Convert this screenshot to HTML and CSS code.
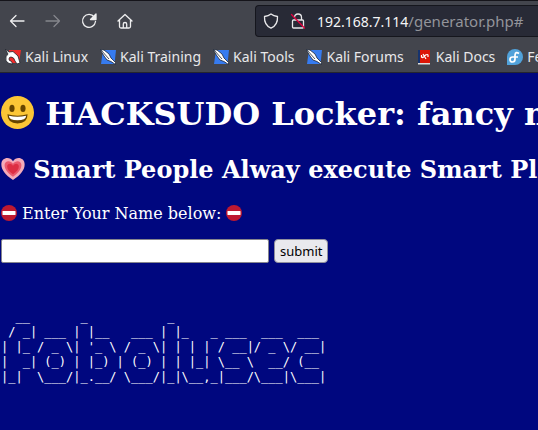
FILE: index.html
```html
<!DOCTYPE html>
<html lang="en">
<head>
<meta charset="utf-8">
<title>HACKSUDO Locker</title>
<link rel="stylesheet" href="styles.css">
</head>
<body>
<svg class="defs" aria-hidden="true">
  <symbol id="tool" viewBox="0 0 16 16">
    <path d="M3 1h13l-1.500 14H1z" fill="#367bf0"/>
    <path d="M0 .5L4 1l5 4 2 4 4.500 4.500v2L11 12.500 7 11 4 7z" fill="#fff" stroke="#1b2436" stroke-width=".8"/>
    <path d="M1 1l8 9" stroke="#1b2436" stroke-width=".8"/>
  </symbol>
  <symbol id="stop" viewBox="0 0 16 16">
    <circle cx="8" cy="8" r="8" fill="#be1931"/>
    <rect x="1.500" y="6" width="13" height="4" rx=".6" fill="#fff"/>
  </symbol>
</svg>
<header class="browser">
  <nav class="toolbar" aria-label="Navigation">
    <button class="tool" aria-label="Back"><svg viewBox="0 0 16 16"><path d="M15 8H1.500M7 2.500L1.500 8 7 13.500"/></svg></button>
    <button class="tool tool-off" aria-label="Forward"><svg viewBox="0 0 16 16"><path d="M1 8h13.500M9 2.500L14.500 8 9 13.500"/></svg></button>
    <button class="tool" aria-label="Reload"><svg viewBox="0 0 16 16"><path d="M13.300 4A6.500 6.500 0 1 0 14.500 8.500"/><path class="solid" d="M15 1v5.500H9.500z"/></svg></button>
    <button class="tool" aria-label="Home"><svg viewBox="0 0 16 16"><path d="M1 8l7-6.500L15 8M2.500 7v6.500q0 1.500 1.500 1.500h8q1.500 0 1.500-1.500V7M6.300 15v-4q0-1.500 1.700-1.500t1.700 1.500v4"/></svg></button>
    <div class="address">
      <svg viewBox="0 0 16 16"><path d="M8 1Q10.500 3 14.500 3.500 15 12 8 15.200 1 12 1.500 3.500 5.500 3 8 1z"/></svg>
      <svg viewBox="0 0 16 16"><path d="M4.500 4.500Q4.500 1 8 1t3.500 3.500V7M4 7h8.500q1 0 1 1v6q0 1-1 1h-9q-1 0-1-1V8q0-1 1-1"/><path class="slash" d="M1.500 1.500l13 13.500"/></svg>
      <span class="url">192.168.7.114<span class="path">/generator.php#</span></span>
    </div>
  </nav>
  <nav class="bookmarks" aria-label="Bookmarks">
    <a href="#"><svg viewBox="0 0 16 16"><path d="M4 1h12l-2 13H3z" fill="#ef2b2b"/><path d="M0 0l4 3 4-.5 5 4.500 2 7-3 1-2-3q-1-4-4-4-2 0-2 2t2 2l2 3-4-.5L1 12q-1-5 2-7z" fill="#fff" stroke="#20242d" stroke-width=".8"/></svg>Kali Linux</a>
    <a href="#"><svg><use href="#tool"/></svg>Kali Training</a>
    <a href="#"><svg><use href="#tool"/></svg>Kali Tools</a>
    <a href="#"><svg><use href="#tool"/></svg>Kali Forums</a>
    <a href="#"><svg viewBox="0 0 16 16"><path d="M2 1h2v13H2z" fill="#16336e"/><path d="M4 1h10v13H4z" fill="#dc1507"/><path d="M2 14h12v1.500H2z" fill="#ddd"/><path d="M5.500 6v2q1 1 2 0l2-2q2-1 2.500 0v2M7 5l3 5" fill="none" stroke="#fff" stroke-width="1.200"/></svg>Kali Docs</a>
    <a href="#"><svg viewBox="0 0 16 16"><path d="M8 0a8 8 0 1 1 0 16H0V8a8 8 0 0 1 8-8z" fill="#51a2da"/><path d="M12 4.500Q8.500 2 8 6v4q0 3-2.500 3T3 10.500 5.500 8H11" fill="none" stroke="#fff" stroke-width="1.700"/></svg>Fedora</a>
  </nav>
</header>
<main class="page">
  <h1><svg viewBox="0 0 36 36" role="img" aria-label="Grinning face"><circle cx="18" cy="18" r="18" fill="#fcc636"/><ellipse cx="12" cy="13.500" rx="2.800" ry="3.900" fill="#664500"/><ellipse cx="24" cy="13.500" rx="2.800" ry="3.900" fill="#664500"/><path d="M7 20q11 3 22 0 0 10-11 10T7 20z" fill="#664500"/><path d="M8.500 21.500q9.500 2 19 0-.5 5-9.500 5t-9.500-5z" fill="#fff"/></svg> HACKSUDO Locker: fancy name generator</h1>
  <h2><svg viewBox="0 0 36 34" role="img" aria-label="Growing heart"><path d="M18 34C6 26 0 18 0 10 0-1 13-3 18 5 23-3 36-1 36 10c0 8-6 16-18 24z" fill="#f4abba"/><path d="M18 29C9 23 5 17 5 11 5 4 14 3 18 9c4-6 13-5 13 2 0 6-4 12-13 18z" fill="#ea596e"/><path d="M18 25c-6-4-9-8-9-12 0-5 6-6 9-1 3-5 9-4 9 1 0 4-3 8-9 12z" fill="#dd2e44"/></svg> Smart People Alway execute Smart Plans</h2>
  <form action="#">
    <label for="name"><svg><use href="#stop"/></svg> Enter Your Name below: <svg><use href="#stop"/></svg></label>
    <div class="entry"><input id="name" type="text"><button class="submit">submit</button></div>
  </form>
  <pre>  __       _           _
 / _| ___ | |__   ___ | |_   _ ___  ___  ___
| |_ / _ \| '_ \ / _ \| | | | / __|/ _ \/ __|
|  _| (_) | |_) | (_) | | |_| \__ \  __/ (__
|_|  \___/|_.__/ \___/|_|\__,_|___/\___|\___|</pre>
</main>
</body>
</html>
```
FILE: styles.css
```css
* { box-sizing: border-box; }

body {
  margin: 0;
  min-height: 100vh;
  overflow: hidden;
  background: #00077f;
  color: #fff;
  font: 16px/20px "DejaVu Serif", serif;
}

.defs { position: absolute; width: 0; height: 0; }

.browser {
  border-top: 1px solid #15141a;
  border-bottom: 1px solid #25262e;
  background: #43454d;
  color: #e8e8ea;
  font: 14px/20px "Noto Sans", sans-serif;
}

.toolbar {
  display: flex;
  align-items: center;
  gap: 20px;
  padding: 4px 0 4px 9px;
}

.tool {
  flex: none;
  width: 16px;
  height: 16px;
  padding: 0;
  border: 0;
  background: none;
  color: #eeeeef;
}

.tool-off { color: #85868c; }

.toolbar svg {
  display: block;
  flex: none;
  width: 16px;
  height: 16px;
  fill: none;
  stroke: currentColor;
  stroke-width: 1.3;
  stroke-linecap: round;
  stroke-linejoin: round;
}

.toolbar .solid { fill: currentColor; }
.toolbar .slash { stroke: #e2003f; }

.address {
  display: flex;
  flex: 1;
  align-items: center;
  gap: 11px;
  height: 32px;
  margin-left: 102px;
  padding-left: 7px;
  border: 1px solid #15161d;
  border-right: 0;
  border-radius: 4px 0 0 4px;
  background: #282a36;
}

.url { color: #f5f5f6; font-size: 14px; }
.path { color: #93949a; font-size: 15px; }

.bookmarks {
  display: flex;
  gap: 12px;
  padding: 6px 0 5px 5px;
}

.bookmarks a {
  display: flex;
  flex: none;
  align-items: center;
  gap: 4px;
  color: inherit;
  text-decoration: none;
}

.bookmarks svg { width: 16px; height: 16px; }

.page { padding: 21px 0 20px 1px; }

h1, h2 { margin: 0; white-space: nowrap; }
h1 { font-size: 32px; line-height: 40px; }
h2 { margin-top: 21px; font-size: 24px; line-height: 30px; }
h1 svg { width: 33px; height: 33px; vertical-align: -4px; }
h2 svg { width: 24px; height: 22px; vertical-align: -2px; }

form { margin-top: 19px; }
label { display: block; }
label svg { width: 16px; height: 16px; vertical-align: -2px; }

.entry {
  display: flex;
  gap: 5px;
  margin-top: 15px;
}

.entry input {
  width: 268px;
  height: 24px;
  border: 1px solid #85858d;
  border-radius: 2px;
  background: #fff;
}

.submit {
  height: 24px;
  padding: 0 5px;
  border: 1px solid #8f8f9d;
  border-radius: 4px;
  background: #e9e9ed;
  color: #000;
  font: 13px/20px "Noto Sans", sans-serif;
}

pre {
  margin: 47px 0 0;
  font: 12px/15px "DejaVu Sans Mono", monospace;
}
```
